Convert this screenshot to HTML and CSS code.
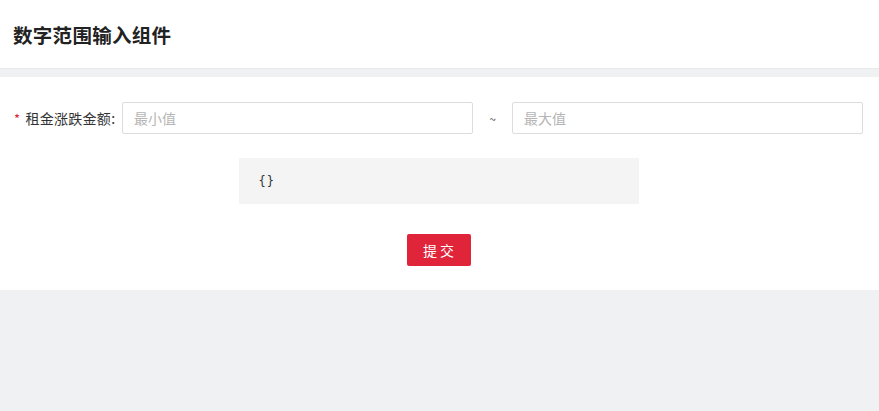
FILE: index.html
```html
<!DOCTYPE html>
<html lang="zh">
<head>
<meta charset="utf-8">
<link rel="stylesheet" href="styles.css">
</head>
<body>
<header class="page-header"><h1 class="title">数字范围输入组件</h1></header>
<main class="card">
  <form class="form">
    <div class="form-row">
      <label class="label"><span class="req">*</span>租金涨跌金额:</label>
      <div class="range">
        <input class="input" type="text" placeholder="最小值">
        <span class="sep">~</span>
        <input class="input" type="text" placeholder="最大值">
      </div>
    </div>
    <pre class="output">{}</pre>
    <div class="actions"><button type="button" class="btn">提 交</button></div>
  </form>
</main>
</body>
</html>
```
FILE: styles.css
```css
html, body { margin: 0; padding: 0; }
body {
  background: #f0f1f3;
  font-family: "Noto Sans CJK SC", "Noto Sans", sans-serif;
  color: #333;
  height: 411px;
}
.page-header {
  background: #fff;
  height: 69px;
  display: flex;
  align-items: center;
  padding-left: 13px;
  border-bottom: 1px solid #e8e9eb;
  box-sizing: border-box;
}
.title {
  margin: 0;
  font-size: 19.5px;
  font-weight: 700;
  color: #222;
  letter-spacing: 0.3px;
}
.card {
  background: #fff;
  margin-top: 8px;
  height: 213px;
  box-sizing: border-box;
  padding: 25px 16px 0 14px;
}
.form-row {
  display: flex;
  align-items: center;
  height: 32px;
}
.label {
  width: 108px;
  font-size: 14px;
  color: #333;
  display: flex;
  align-items: center;
  white-space: nowrap;
  letter-spacing: 0.3px;
}
.req { color: #e0243a; margin-right: 5px; font-size: 13px; }
.range { flex: 1; display: flex; align-items: center; }
.input {
  flex: 1;
  height: 32px;
  box-sizing: border-box;
  border: 1px solid #dcdcdc;
  border-radius: 2px;
  padding: 0 11px;
  font-family: inherit;
  font-size: 14px;
  color: #333;
  outline: none;
  min-width: 0;
}
.input::placeholder { color: #b5b5b5; }
.sep {
  width: 39px;
  text-align: center;
  font-size: 12px;
  color: #555;
}
.output {
  width: 400px;
  height: 46px;
  box-sizing: border-box;
  margin: 24px auto 0;
  background: #f4f4f4;
  padding: 14px 20px;
  font-family: "DejaVu Sans Mono", monospace;
  font-size: 12px;
  line-height: 18px;
  letter-spacing: 1px;
  color: #333;
}
.actions { display: flex; justify-content: center; margin-top: 30px; }
.btn {
  width: 64px;
  height: 32px;
  background: #e0243a;
  color: #fff;
  border: none;
  border-radius: 2px;
  font-family: inherit;
  font-size: 14px;
  padding: 0;
}
```
